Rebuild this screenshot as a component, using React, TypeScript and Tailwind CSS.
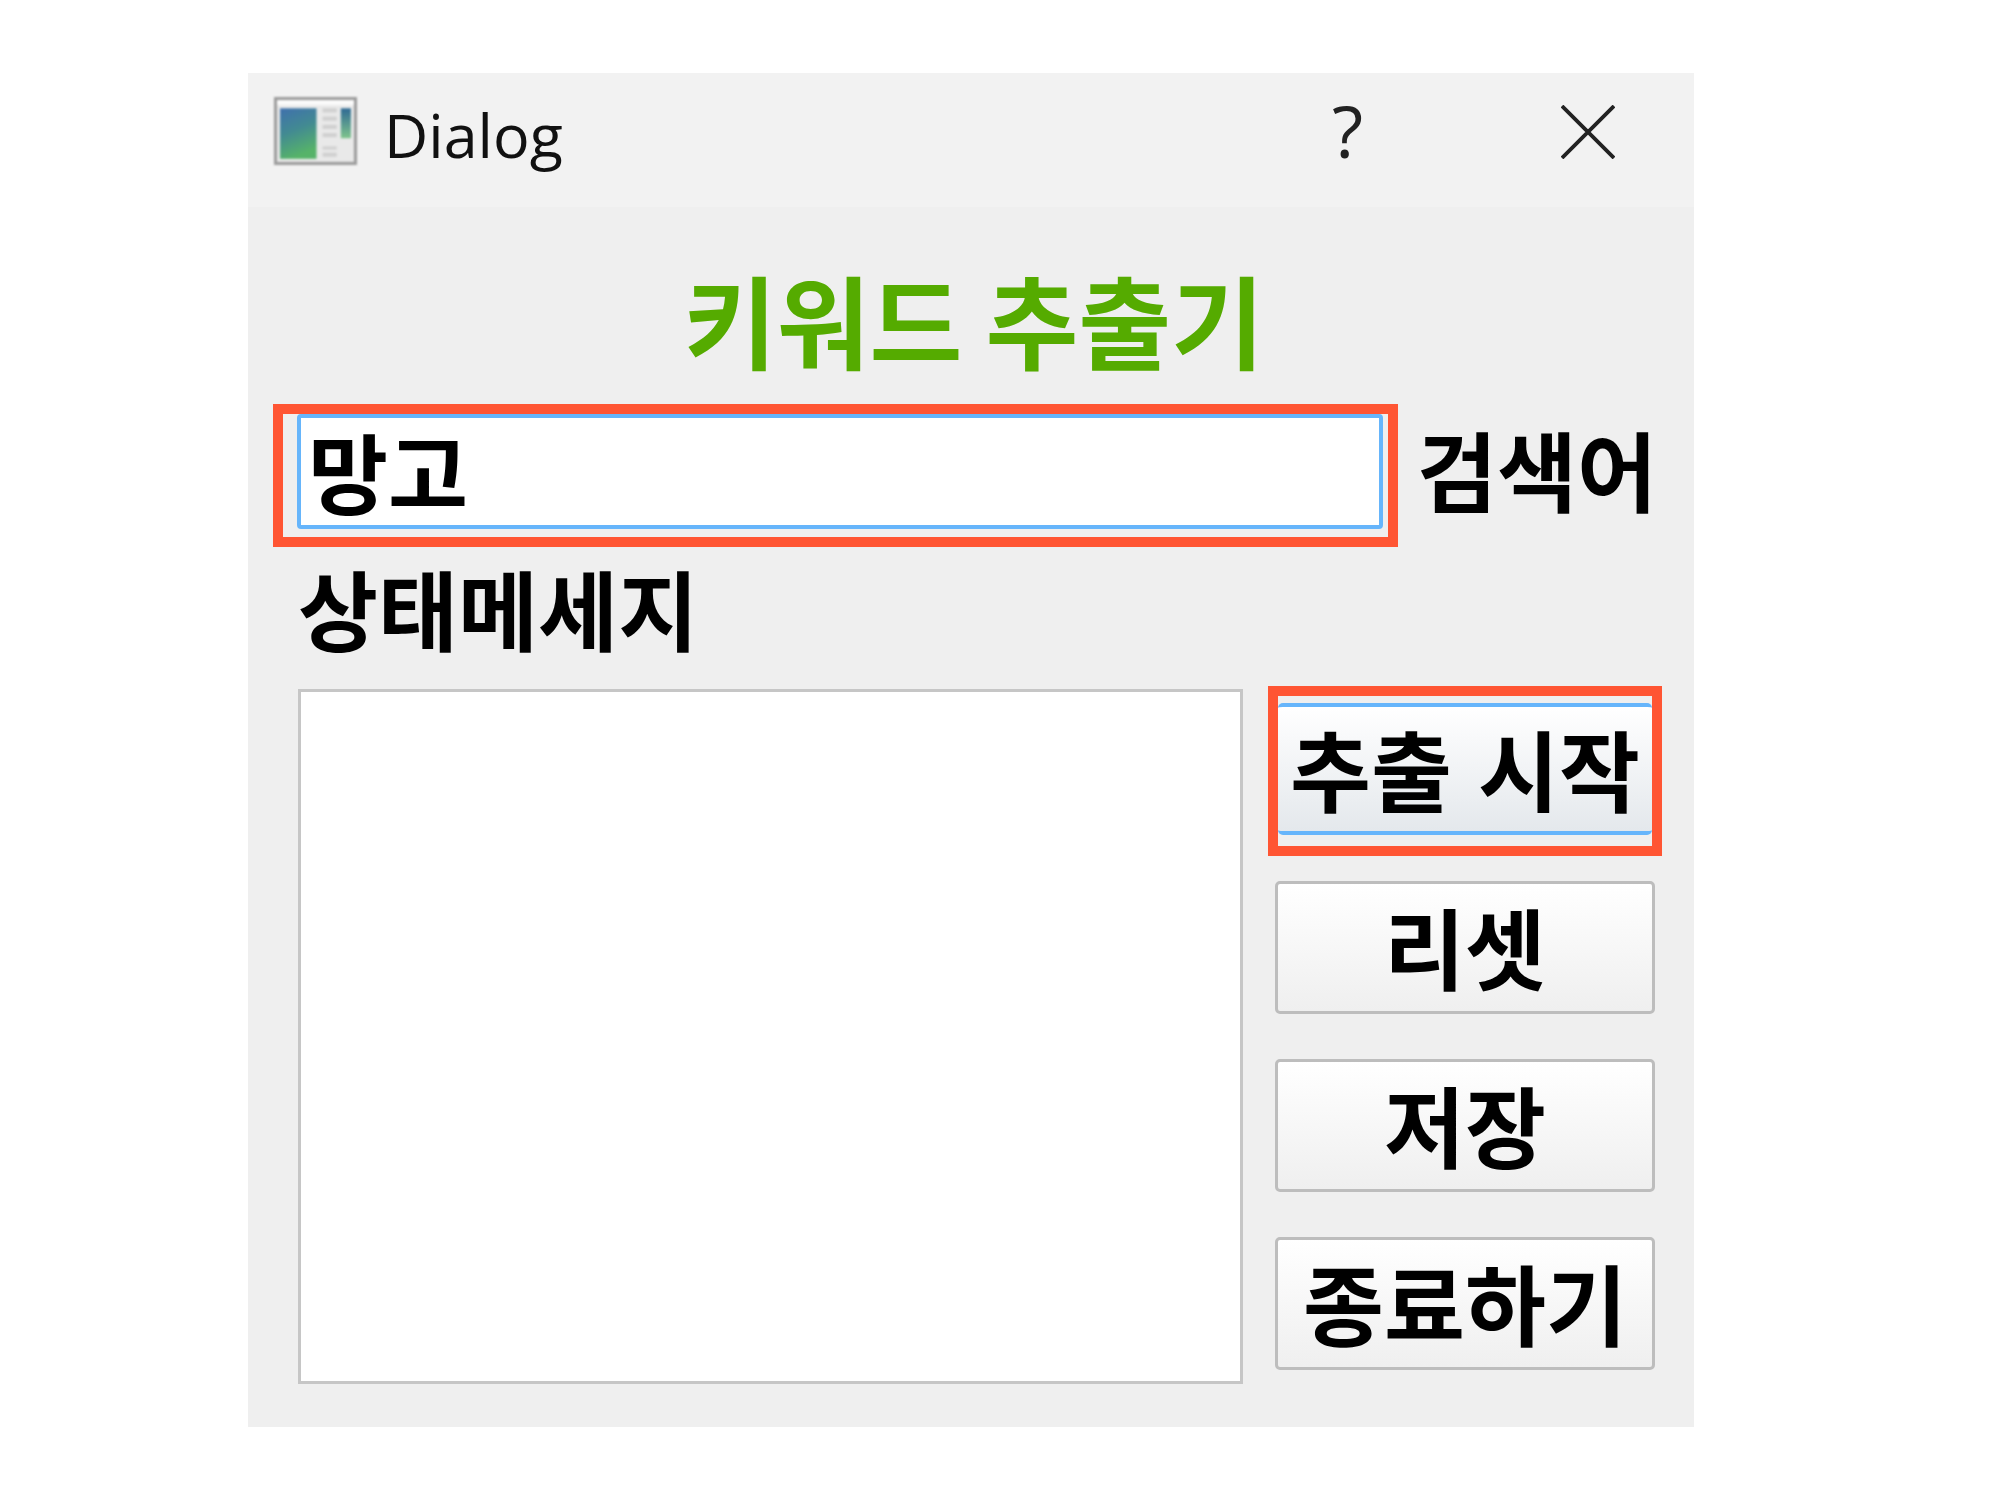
const kr = "font-['Noto_Sans_CJK_KR','Noto_Sans',sans-serif]";

function AppIcon() {
  return (
    <svg viewBox="0 0 82 66" preserveAspectRatio="none" className="w-[83px] h-[68px] blur-[1px] mb-[18px]">
      <defs>
        <linearGradient id="pane" x1="0" y1="0" x2="0.3" y2="1">
          <stop offset="0" stopColor="#3f70ad" />
          <stop offset="0.5" stopColor="#428a92" />
          <stop offset="1" stopColor="#56b369" />
        </linearGradient>
        <linearGradient id="bar" x1="0" y1="0" x2="0" y2="1">
          <stop offset="0" stopColor="#2f6a94" />
          <stop offset="1" stopColor="#7fc48c" />
        </linearGradient>
      </defs>
      <rect x="1.5" y="1.5" width="79" height="63" fill="#e9e9e9" stroke="#9c9c9c" strokeWidth="3" />
      <rect x="3" y="3" width="76" height="5" fill="#fafafa" />
      <rect x="6" y="11" width="36" height="49" fill="url(#pane)" />
      <rect x="66" y="11" width="10" height="29" fill="url(#bar)" />
      <g fill="#d0d0d0">
        <rect x="48" y="11" width="14" height="4" />
        <rect x="48" y="19" width="14" height="4" />
        <rect x="48" y="27" width="14" height="4" />
        <rect x="48" y="35" width="14" height="4" />
        <rect x="48" y="48" width="14" height="3" />
        <rect x="48" y="54" width="14" height="4" />
      </g>
    </svg>
  );
}

function ActionButton({ label }: { label: string }) {
  return (
    <button className={`${kr} ml-[7px] w-[380px] h-[133px] pb-[5px] rounded-[5px] border-[3px] border-[#bdbdbd] bg-gradient-to-b from-[#ffffff] to-[#efefef] text-[88px] font-bold leading-none text-black blur-[0.6px]`}>
      {label}
    </button>
  );
}

export default function App() {
  return (
    <div className="min-h-[1500px] bg-white pl-[248px] pt-[73px]">
      <div className={`${kr} w-[1446px] h-[1354px] bg-[#efefef] flex flex-col`}>
        <div className="h-[134px] shrink-0 bg-[#f2f2f2] flex items-center pl-[26px] pr-[79px]">
          <AppIcon />
          <span className="ml-[27px] font-['Open_Sans',sans-serif] text-[61px] leading-none text-[#111] pb-[12px] blur-[0.6px]">Dialog</span>
          <span className="ml-auto font-['Open_Sans',sans-serif] text-[72px] leading-none text-[#222] pb-[20px] blur-[0.4px]">?</span>
          <svg viewBox="0 0 54 54" className="ml-[198px] w-[54px] h-[54px] mb-[16px] blur-[0.4px]">
            <path d="M1 1 L53 53 M53 1 L1 53" stroke="#222" strokeWidth="3.8" fill="none" />
          </svg>
        </div>

        <div className="h-[197px] shrink-0 flex items-center justify-center pt-[26px] pl-[6px]">
          <span className="text-[101px] font-bold leading-none text-[#55ab00] blur-[0.6px]">키워드 추출기</span>
        </div>

        <div className="flex items-center pl-[25px]">
          <div className="w-[1125px] h-[143px] border-[10px] border-[#ff5533] pl-[14px] pr-[5px] pb-[8px]">
            <input
              readOnly
              value="망고"
              className={`${kr} w-full h-full rounded-[4px] border-[4px] border-[#66b5fb] bg-white pl-[7px] pb-[3px] text-[87px] font-bold leading-none text-black outline-none blur-[0.6px]`}
            />
          </div>
          <span className="ml-[19px] mb-[14px] text-[87px] font-bold leading-none text-black blur-[0.6px]">검색어</span>
        </div>

        <div className="h-[142px] shrink-0 flex items-center pl-[50px] pb-[22px]">
          <span className="text-[87px] font-bold leading-none text-black blur-[0.6px]">상태메세지</span>
        </div>

        <div className="flex pl-[50px]">
          <div className="w-[945px] h-[695px] border-[3px] border-[#c6c6c6] bg-white blur-[0.5px]" />
          <div className="ml-[25px] flex flex-col -mt-[3px]">
            <div className="w-[394px] h-[170px] border-[10px] border-[#ff5533] overflow-hidden pt-[7px]">
              <button className="w-full h-[132px] pb-[5px] rounded-[5px] border-y-[4px] border-[#66b5fb] bg-gradient-to-b from-[#ffffff] to-[#e4e8ec] text-[88px] font-bold leading-none text-black [word-spacing:6px] blur-[0.6px]">
                추출 시작
              </button>
            </div>
            <div className="flex flex-col gap-[45px] mt-[25px]">
              <ActionButton label="리셋" />
              <ActionButton label="저장" />
              <ActionButton label="종료하기" />
            </div>
          </div>
        </div>
      </div>
    </div>
  );
}
